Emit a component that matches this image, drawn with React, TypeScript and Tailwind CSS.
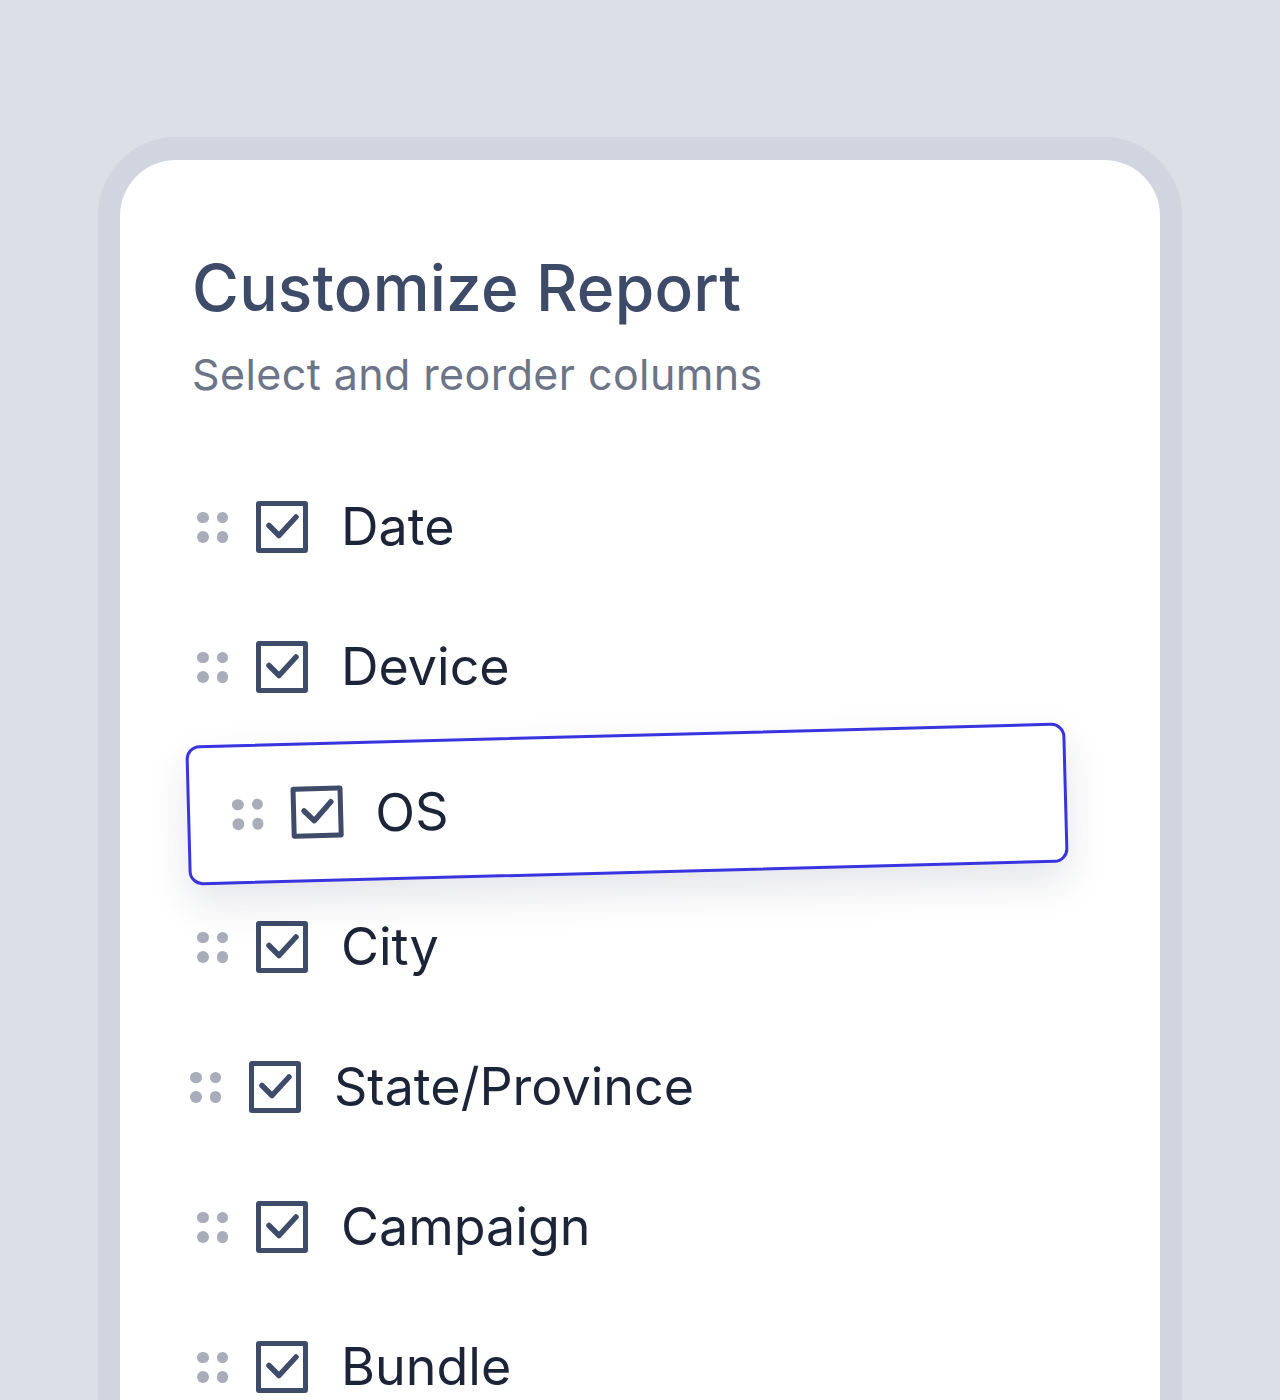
import React from 'react';

const columns = ['Date', 'Device', 'OS', 'City', 'State/Province', 'Campaign', 'Bundle'];

const DragHandle: React.FC = () => (
    <div className="grid grid-cols-2 gap-x-[8px] gap-y-[8px] w-[31px] shrink-0">
        {[0, 1, 2, 3].map(i => (
            <span key={i} className="block w-[11.5px] h-[11.5px] rounded-full bg-[#a9adba]" />
        ))}
    </div>
);

const CheckBox: React.FC = () => (
    <div className="w-[52px] h-[52px] shrink-0 border-[5px] border-[#3f4c69] rounded-[3px] flex items-center justify-center">
        <svg viewBox="0 0 42 42" className="w-[42px] h-[42px]" fill="none">
            <path d="M8 19.5 L18 29.5 L35 11" stroke="#3f4c69" strokeWidth="5.5" strokeLinecap="round" strokeLinejoin="round" />
        </svg>
    </div>
);

const ColumnRow: React.FC<{ label: string }> = ({ label }) => {
    const dragging = label === 'OS';
    const shifted = label === 'State/Province';

    if (dragging) {
        return (
            <div className="h-[140px] flex items-center">
                <div className="-ml-[9px] w-[880px] h-[140px] flex items-center gap-[28px] pl-[42px] bg-white border-[3px] border-[#3934e0] rounded-[14px] -rotate-[1.5deg] -translate-x-[1px] -translate-y-[3px] shadow-[0_18px_40px_rgba(30,41,70,0.12)]">
                    <DragHandle />
                    <CheckBox />
                    <span className="ml-[4px] text-[52px] text-[#1c2437] leading-none translate-y-[3px]">{label}</span>
                </div>
            </div>
        );
    }

    return (
        <div className={`h-[140px] flex items-center gap-[28px] ${shifted ? '-ml-[7px]' : ''}`}>
            <DragHandle />
            <CheckBox />
            <span className="ml-[5px] text-[52px] text-[#1c2437] leading-none">{label}</span>
        </div>
    );
};

export default function App() {
    return (
        <div className="h-[1400px] overflow-hidden bg-[#dbdfe7] pt-[137px] px-[98px]" style={{ fontFamily: 'Inter, "Noto Sans", sans-serif' }}>
            <div className="h-[1400px] bg-[#d1d5df] rounded-t-[78px] pt-[23px] px-[22px]">
                <div className="h-[1400px] bg-white rounded-t-[56px] pt-[88px] pl-[72px] pr-[72px]">
                    <h1 className="text-[64px] font-medium text-[#3d4a68] leading-[80px] tracking-[0.2px]">Customize Report</h1>
                    <p className="mt-[18px] text-[43px] text-[#6c7488] leading-[56px] tracking-[0.4px]">Select and reorder columns</p>
                    <div className="mt-[55px] pl-[5px]">
                        {columns.map(c => (
                            <ColumnRow key={c} label={c} />
                        ))}
                    </div>
                </div>
            </div>
        </div>
    );
}
